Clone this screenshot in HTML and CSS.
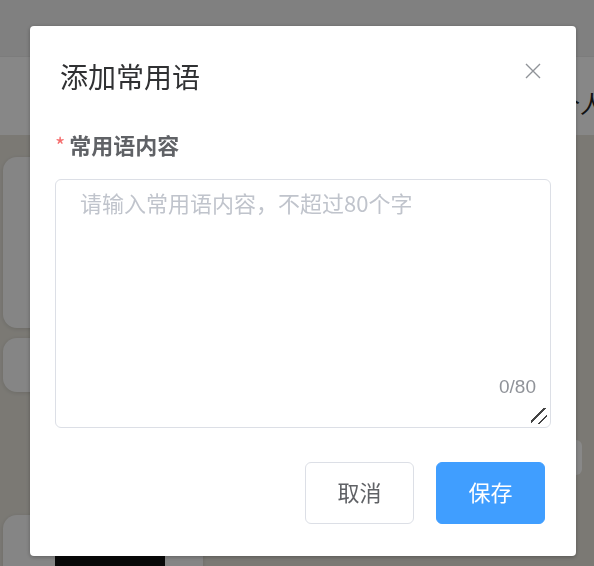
FILE: index.html
```html
<!DOCTYPE html>
<html lang="zh-CN">
<head>
    <meta charset="UTF-8">
    <title>常用语</title>
    <link rel="stylesheet" href="styles.css">
</head>
<body>
    <div class="page">
        <div class="top-bar"></div>
        <div class="nav-bar">
            <span class="nav-user">个人中心</span>
        </div>
        <div class="content">
            <div class="side">
                <div class="card card-tall"></div>
                <div class="card card-short"></div>
                <div class="card card-media">
                    <div class="thumb"></div>
                </div>
            </div>
            <div class="main">
                <div class="side-btn"></div>
            </div>
        </div>
    </div>

    <!-- dialog mask -->
    <div class="mask">
        <div class="dialog">
            <div class="dialog-header">
                <span class="dialog-title">添加常用语</span>
                <button class="dialog-close" type="button" aria-label="关闭">
                    <svg width="16" height="16" viewBox="0 0 16 16">
                        <path d="M1 1 L15 15 M15 1 L1 15" stroke="#909399" stroke-width="1.4" fill="none"/>
                    </svg>
                </button>
            </div>
            <div class="dialog-body">
                <label class="form-label" for="phrase"><span class="required">*</span>常用语内容</label>
                <div class="textarea-wrap">
                    <textarea id="phrase" class="phrase-input" maxlength="80" placeholder="请输入常用语内容，不超过80个字"></textarea>
                    <span class="count">0/80</span>
                    <span class="grip"></span>
                </div>
            </div>
            <div class="dialog-footer">
                <button class="btn btn-default" type="button">取消</button>
                <button class="btn btn-primary" type="button">保存</button>
            </div>
        </div>
    </div>
</body>
</html>
```

FILE: styles.css
```css
body {
    margin: 0;
    padding: 0;
    font-family: "Liberation Sans", "Noto Sans CJK SC", sans-serif;
    background-color: #e3e0d7;
    overflow: hidden;
}
.page {
    height: 566px;
    display: flex;
    flex-direction: column;
    overflow: hidden;
}
.top-bar {
    flex-shrink: 0;
    height: 56px;
    background-color: #ececec;
    border-bottom: 1px solid #e6e6e6;
}
.nav-bar {
    flex-shrink: 0;
    height: 78px;
    background-color: #fafafa;
    display: flex;
    align-items: center;
    padding-left: 556px;
    overflow: hidden;
}
.nav-user {
    font-size: 24px;
    color: #222;
    white-space: nowrap;
    margin-top: 12px;
}
.content {
    flex: 1;
    display: flex;
    padding: 22px 0 0 3px;
    overflow: hidden;
}
.side {
    width: 200px;
    flex-shrink: 0;
    display: flex;
    flex-direction: column;
}
.card {
    flex-shrink: 0;
    background-color: #f6f6f6;
    border-radius: 14px;
    box-shadow: 0 1px 4px rgba(0, 0, 0, 0.12);
}
.card-tall {
    height: 171px;
}
.card-short {
    height: 54px;
    margin-top: 10px;
}
.card-media {
    height: 120px;
    margin-top: 123px;
    padding: 25px 0 0 52px;
}
.thumb {
    width: 110px;
    height: 80px;
    background-color: #111;
}
.main {
    flex: 1;
}
.side-btn {
    width: 60px;
    height: 35px;
    margin: 283px 12px 0 auto;
    background-color: #fbfbfb;
    border-radius: 6px;
}

/* dialog */
.mask {
    position: fixed;
    top: 0;
    left: 0;
    right: 0;
    bottom: 0;
    background-color: rgba(0, 0, 0, 0.46);
    padding: 26px 0 0 30px;
}
.dialog {
    width: 546px;
    background-color: #ffffff;
    border-radius: 4px;
    box-shadow: 0 1px 4px rgba(0, 0, 0, 0.3);
    font-family: "Noto Sans CJK SC", sans-serif;
}
.dialog-header {
    position: relative;
    padding: 29px 30px 10px 30px;
}
.dialog-title {
    display: block;
    font-size: 28px;
    line-height: 42px;
    color: #303133;
}
.dialog-close {
    position: absolute;
    top: 37px;
    right: 35px;
    width: 16px;
    height: 16px;
    padding: 0;
    border: none;
    background: none;
    cursor: pointer;
}
.dialog-close svg {
    display: block;
}
.dialog-body {
    padding: 21px 25px 0 25px;
}
.form-label {
    display: block;
    font-size: 22px;
    line-height: 33px;
    font-weight: bold;
    color: #606266;
    margin-bottom: 18px;
}
.required {
    color: #f56c6c;
    font-weight: normal;
    margin-right: 4px;
}
.textarea-wrap {
    position: relative;
}
.phrase-input {
    display: block;
    width: 100%;
    height: 249px;
    box-sizing: border-box;
    padding: 6px 24px;
    border: 1px solid #dcdfe6;
    border-radius: 6px;
    font-family: "Noto Sans CJK SC", sans-serif;
    font-size: 22px;
    line-height: 33px;
    color: #606266;
    resize: none;
    outline: none;
}
.phrase-input::placeholder {
    color: #c0c4cc;
}
.count {
    position: absolute;
    right: 15px;
    bottom: 30px;
    font-family: "Liberation Sans", sans-serif;
    font-size: 19px;
    line-height: 22px;
    color: #909399;
}
.grip {
    position: absolute;
    right: 4px;
    bottom: 4px;
    width: 16px;
    height: 16px;
    background:
        linear-gradient(135deg, transparent 40%, #444 40%, #444 47%, transparent 47%),
        linear-gradient(135deg, transparent 70%, #444 70%, #444 77%, transparent 77%);
    pointer-events: none;
}
.dialog-footer {
    display: flex;
    justify-content: flex-end;
    gap: 22px;
    padding: 34px 31px 32px 0;
}
.btn {
    width: 109px;
    height: 62px;
    padding: 0 0 4px 0;
    border-radius: 6px;
    font-family: "Noto Sans CJK SC", sans-serif;
    font-size: 22px;
    line-height: 1;
    cursor: pointer;
}
.btn-default {
    background-color: #ffffff;
    border: 1px solid #dcdfe6;
    color: #606266;
}
.btn-primary {
    background-color: #409eff;
    border: 1px solid #409eff;
    color: #ffffff;
}
```
